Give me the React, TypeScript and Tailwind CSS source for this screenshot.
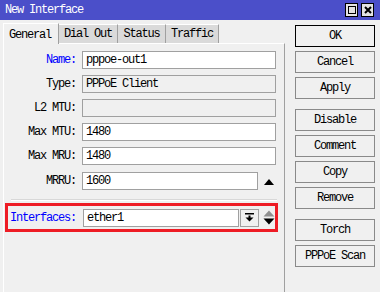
import React from 'react'

const mono = { fontFamily: '"Liberation Mono", "DejaVu Sans Mono", monospace' }

const fields = [
  { label: 'Name:', value: 'pppoe-out1', blue: true, ro: false },
  { label: 'Type:', value: 'PPPoE Client', ro: true },
  { label: 'L2 MTU:', value: '', ro: true },
  { label: 'Max MTU:', value: '1480', ro: false },
  { label: 'Max MRU:', value: '1480', ro: false },
]

const groups = [['OK', 'Cancel', 'Apply'], ['Disable', 'Comment', 'Copy', 'Remove'], ['Torch', 'PPPoE Scan']]

function Btn({ text }: { text: string }) {
  const isOk = text === 'OK'
  return (
    <div
      className={
        'h-[22px] w-[80px] flex items-center justify-center bg-[#f0f0f0] text-black ' +
        (isOk ? 'border border-black' : 'border border-[#8a8a8a]')
      }
    >
      {text}
    </div>
  )
}

export default function App() {
  return (
    <div className="w-[380px] h-[292px] bg-[#f0f0f0] overflow-hidden text-[12px] tracking-[-1.2px] leading-none text-black" style={mono}>
      {/* title bar */}
      <div className="h-[20px] bg-[#4b4fc9] flex items-center justify-between pl-[5px] pr-[6px]">
        <span className="text-white">New Interface</span>
        <div className="flex gap-[3px]">
          <div className="w-[13px] h-[14px] bg-[#e4e4e4] border border-black flex items-center justify-center">
            <div className="w-[8px] h-[8px] border border-black" />
          </div>
          <div className="w-[13px] h-[14px] bg-[#e4e4e4] border border-black flex items-center justify-center">
            <svg width="8" height="8" viewBox="0 0 8 8">
              <path d="M1 1 L7 7 M7 1 L1 7" stroke="black" strokeWidth="2" />
            </svg>
          </div>
        </div>
      </div>

      <div className="flex">
        {/* left: tabs + panel */}
        <div className="ml-[3px] w-[282px] pt-[2px]">
          <div className="flex items-end h-[21px]">
            <div className="h-[21px] w-[56px] bg-[#f0f0f0] border-t border-l border-white border-r border-r-[#a0a0a0] flex items-start pt-[5px] pl-[5px] relative z-10 -mb-px">
              General
            </div>
            {['Dial Out', 'Status', 'Traffic'].map((t, i) => (
              <div
                key={t}
                className={
                  'h-[19px] bg-[#dadada] border-t border-white border-r border-r-[#a0a0a0] flex items-center justify-center ' +
                  ['w-[59px]', 'w-[48px]', 'w-[53px]'][i]
                }
              >
                {t}
              </div>
            ))}
          </div>
          <div className="h-[260px] border-t border-t-white border-l border-l-white border-r border-r-[#a0a0a0] pt-[7px]">
            <div className="flex flex-col gap-[6px]">
              {fields.map((f) => (
                <div key={f.label} className="flex items-center h-[18px]">
                  <div className={'w-[72px] text-right ' + (f.blue ? 'text-[#0000ff]' : 'text-black')}>{f.label}</div>
                  <div
                    className={
                      'ml-[6px] w-[194px] h-[18px] border border-[#a0a0a0] flex items-center pl-[3px] ' +
                      (f.ro ? 'bg-[#f0f0f0]' : 'bg-white')
                    }
                  >
                    {f.value}
                  </div>
                </div>
              ))}
              <div className="flex items-center h-[18px] mt-px">
                <div className="w-[72px] text-right">MRRU:</div>
                <div className="ml-[6px] w-[176px] h-[18px] border border-[#a0a0a0] bg-white flex items-center pl-[3px]">1600</div>
                <svg width="10" height="6" viewBox="0 0 10 6" className="ml-[6px] mt-[1px]">
                  <path d="M5 0 L10 6 L0 6 Z" fill="black" />
                </svg>
              </div>
            </div>
            <div className="ml-[7px] mr-[7px] mt-[9px] h-px bg-[#d8d8d8] border-b border-white box-content" />
            <div className="ml-[1px] mt-[2px] w-[273px] h-[29px] border-[3px] border-[#ee1c25] flex items-center">
              <div className="w-[68px] pl-[2px] text-[#0000ff]">Interfaces:</div>
              <div className="ml-[7px] w-[157px] h-[18px] border border-[#a0a0a0] bg-white flex items-center pl-[3px]">ether1</div>
              <div className="ml-px w-[19px] h-[18px] border border-[#a0a0a0] bg-[#f0f0f0] flex items-center justify-center">
                <svg width="9" height="9" viewBox="0 0 9 9">
                  <path d="M0 0 H9 V1.5 H0 Z M3.5 2.5 H5.5 V4.5 H3.5 Z M0.5 4.5 H8.5 L4.5 8.5 Z" fill="black" />
                </svg>
              </div>
              <svg width="12" height="15" viewBox="0 0 12 15" className="ml-[4px]">
                <path d="M6 0.5 L11.5 6.5 L0.5 6.5 Z" fill="#909090" />
                <path d="M0.5 8.5 L11.5 8.5 L6 14.5 Z" fill="black" />
              </svg>
            </div>
          </div>
        </div>

        {/* right: buttons */}
        <div className="ml-[10px] pt-[5px] flex flex-col gap-[10px]">
          {groups.map((g, i) => (
            <div key={i} className="flex flex-col gap-[4px]">
              {g.map((b) => (
                <Btn key={b} text={b} />
              ))}
            </div>
          ))}
        </div>
      </div>
    </div>
  )
}
